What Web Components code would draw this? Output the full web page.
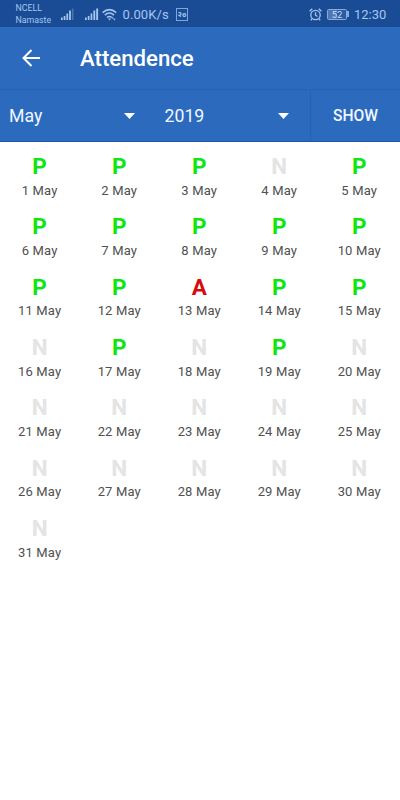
<!DOCTYPE html>
<html lang="en">
<head>
<meta charset="utf-8">
<meta name="viewport" content="width=device-width, initial-scale=1">
<title>Attendence</title>
<style>
  body {
    margin: 0;
    background: #fff;
    font-family: Roboto, "Noto Sans", sans-serif;
  }
</style>
</head>
<body>
<attendance-screen></attendance-screen>

<script>
class StatusBar extends HTMLElement {
  constructor() {
    super();
    this.attachShadow({ mode: "open" });
    this.shadowRoot.innerHTML = `
      <style>
        :host {
          display: flex;
          align-items: center;
          box-sizing: border-box;
          height: 27px;
          padding: 1px 13px 0 15.5px;
          background: #194c94;
          color: #a5c6f0;
          white-space: nowrap;
        }
        svg { display: block; flex: none; }
        .StatusBar__Carrier {
          width: 45px;
          font-size: 8.8px;
          line-height: 12px;
        }
        .StatusBar__Speed {
          width: 53.5px;
          font-size: 13px;
          letter-spacing: 0.1px;
        }
        .StatusBar__Date {
          box-sizing: border-box;
          width: 12px;
          height: 13px;
          border: 1px solid #7fa6da;
          font-size: 8px;
          font-weight: 700;
          line-height: 11px;
          text-align: center;
        }
        .StatusBar__Battery {
          display: flex;
          align-items: center;
          margin: 0 5px 0 5px;
        }
        .StatusBar__Level {
          box-sizing: border-box;
          width: 20px;
          height: 11px;
          border: 1px solid #86abdc;
          border-radius: 1.5px;
          background: linear-gradient(to right, #4f79b4 52%, #2b5ca2 52%);
          color: #c5dcfa;
          font-size: 9.5px;
          line-height: 9px;
          text-align: center;
        }
        .StatusBar__Tip {
          width: 2px;
          height: 6px;
          background: #86abdc;
        }
        .StatusBar__Time {
          width: 33px;
          font-size: 13px;
        }
        .StatusBar__Spacer { flex: 1; }
      </style>
      <div class="StatusBar__Carrier"><div>NCELL</div><div>Namaste</div></div>
      <svg width="14" height="13" viewBox="0 0 14 13" fill="#a5c6f0">
        <path d="M0 9.6h1.7V12H0zM2.7 8h1.7v4H2.7zM5.4 5.6h1.7V12H5.4zM8.1 2.6h1.8V12H8.1z"/>
        <path fill="#4975b3" d="M10.9.6h1.6V12h-1.6z"/>
      </svg>
      <svg style="margin-left:10px" width="14" height="13" viewBox="0 0 14 13" fill="#a5c6f0">
        <path d="M0 9.6h1.7V12H0zM2.8 8h1.7v4H2.8zM5.6 5.6h1.7V12H5.6zM8.4 2.6h1.8V12H8.4zM11.2.6h1.9V12h-1.9z"/>
      </svg>
      <svg style="margin:0 6px 0 3px" width="15" height="13" viewBox="0 0 15 13" fill="none" stroke="#a5c6f0" stroke-width="1.5">
        <path d="M.6 4.6Q7.4-1.4 14.2 4.6M2.8 7.1Q7.4 3 12 7.1M5 9.5Q7.4 7.4 9.8 9.5"/>
        <path fill="#a5c6f0" stroke="none" d="M6 10.4h3L7.5 12.4zM9.5 10.5l1.2-1.7 1.2 1.7zM11.1 10.8h2.5l-1.2 1.7z"/>
      </svg>
      <span class="StatusBar__Speed">0.00K/s</span>
      <span class="StatusBar__Date">२०</span>
      <span class="StatusBar__Spacer"></span>
      <svg width="13" height="13" viewBox="0 0 13 13" fill="none" stroke="#a5c6f0" stroke-width="1.3">
        <circle cx="6.5" cy="7" r="4.7"/>
        <path d="M6.5 4.2v3l2 1.3M.6 3.3L3.3.8M12.4 3.3L9.7.8M3 10.8l-1.2 1.5M10 10.8l1.2 1.5"/>
      </svg>
      <span class="StatusBar__Battery">
        <span class="StatusBar__Level">52</span>
        <span class="StatusBar__Tip"></span>
      </span>
      <span class="StatusBar__Time">12:30</span>
    `;
  }
}

class AppBar extends HTMLElement {
  constructor() {
    super();
    this.attachShadow({ mode: "open" });
    this.shadowRoot.innerHTML = `
      <style>
        :host {
          display: flex;
          align-items: center;
          box-sizing: border-box;
          height: 62px;
          padding: 0 22px;
          gap: 39px;
          background: #2c6abd;
          color: #fff;
        }
        svg { display: block; }
        .AppBar__Title {
          margin: 0;
          font-size: 22.2px;
          font-weight: 500;
          line-height: 28px;
        }
      </style>
      <svg width="19" height="18" viewBox="0 0 19 18" fill="none" stroke="#fff" stroke-width="2">
        <path d="M18 9H2M9.5 1L1.5 9l8 8"/>
      </svg>
      <h1 class="AppBar__Title"><slot></slot></h1>
    `;
  }
}

class SelectField extends HTMLElement {
  constructor() {
    super();
    this.attachShadow({ mode: "open" });
    this.shadowRoot.innerHTML = `
      <style>
        :host {
          display: flex;
          align-items: center;
          justify-content: space-between;
          box-sizing: border-box;
          padding: 0 21px 0 9px;
          font-size: 17.7px;
          line-height: 24px;
        }
        svg { display: block; }
      </style>
      <span><slot></slot></span>
      <svg width="11" height="6" viewBox="0 0 11 6" fill="#fff"><path d="M0 0h11L5.5 6z"/></svg>
    `;
  }
}

class FilterBar extends HTMLElement {
  constructor() {
    super();
    this.attachShadow({ mode: "open" });
    this.shadowRoot.innerHTML = `
      <style>
        :host {
          display: grid;
          grid-template-columns: 155.5px 154.5px 90px;
          box-sizing: border-box;
          height: 53px;
          border-top: 1px solid #2762b2;
          border-bottom: 1px solid #1f56a4;
          background: #2c6abd;
          color: #f0f8ff;
        }
        .FilterBar__Show {
          margin: 0;
          padding: 1px 0 0;
          border: 0;
          border-left: 1px solid #2762b2;
          background: none;
          color: inherit;
          font: 500 15.6px/20px Roboto, sans-serif;
          cursor: pointer;
        }
      </style>
      <select-field>May</select-field>
      <select-field>2019</select-field>
      <button class="FilterBar__Show" type="button">SHOW</button>
    `;
  }
}

class AttendanceDay extends HTMLElement {
  constructor() {
    super();
    this.attachShadow({ mode: "open" });
    this.shadowRoot.innerHTML = `
      <style>
        :host {
          display: flex;
          flex-direction: column;
          align-items: center;
          --status-color: #e4e4e4;
        }
        :host([status="P"]) { --status-color: #0ee610; }
        :host([status="A"]) { --status-color: #d90a0a; }
        .AttendanceDay__Status {
          color: var(--status-color);
          font-size: 22.5px;
          font-weight: 700;
          line-height: 26px;
        }
        .AttendanceDay__Label {
          color: #505050;
          font-size: 13px;
          line-height: 16px;
          letter-spacing: 0.15px;
          margin-top: 3.5px;
        }
      </style>
      <span class="AttendanceDay__Status"></span>
      <span class="AttendanceDay__Label"><slot></slot></span>
    `;
  }

  connectedCallback() {
    this.shadowRoot.querySelector(".AttendanceDay__Status").textContent =
      this.getAttribute("status");
  }
}

class AttendanceGrid extends HTMLElement {
  constructor() {
    super();
    this.attachShadow({ mode: "open" });
    // one letter per day: present, absent, not marked
    const days = "PPPNPPPPPPPPAPPNPNPNNNNNNNNNNNN";
    this.shadowRoot.innerHTML = `
      <style>
        :host {
          display: grid;
          grid-template-columns: 79.25px repeat(4, 80px);
          grid-auto-rows: 60.35px;
          padding-top: 11px;
        }
      </style>
      ${[...days]
        .map((status, i) => `<attendance-day status="${status}">${i + 1} May</attendance-day>`)
        .join("")}
    `;
  }
}

class AttendanceScreen extends HTMLElement {
  constructor() {
    super();
    this.attachShadow({ mode: "open" });
    this.shadowRoot.innerHTML = `
      <style>
        :host {
          display: block;
          width: 400px;
          height: 800px;
          background: #fff;
          overflow: hidden;
        }
      </style>
      <status-bar></status-bar>
      <app-bar>Attendence</app-bar>
      <filter-bar></filter-bar>
      <attendance-grid></attendance-grid>
    `;
  }
}

customElements.define("status-bar", StatusBar);
customElements.define("app-bar", AppBar);
customElements.define("select-field", SelectField);
customElements.define("filter-bar", FilterBar);
customElements.define("attendance-day", AttendanceDay);
customElements.define("attendance-grid", AttendanceGrid);
customElements.define("attendance-screen", AttendanceScreen);
</script>
</body>
</html>
